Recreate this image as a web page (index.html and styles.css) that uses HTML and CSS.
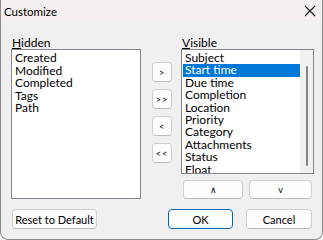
FILE: index.html
```html
<!DOCTYPE html>
<html>
  <head>
    <link rel="stylesheet" href="styles.css">
  </head>
  <body>
    <div class="window">
      <div class="titlebar">
        <span class="title">Customize</span>
        <svg class="close" width="12" height="12" viewBox="0 0 12 12">
          <path d="M1 1 L11 11 M11 1 L1 11" stroke="#1a1a1a" stroke-width="1.1" fill="none" />
        </svg>
      </div>
      <div class="content">
        <div class="columns">
          <div class="label"><u>H</u>idden</div>
          <div></div>
          <div class="label"><u>V</u>isible</div>

          <div class="listbox hidden-list">
            <div class="items">
              <div class="item">Created</div>
              <div class="item">Modified</div>
              <div class="item">Completed</div>
              <div class="item">Tags</div>
              <div class="item">Path</div>
            </div>
          </div>

          <div class="movers">
            <button class="btn small">&gt;</button>
            <button class="btn small">&gt;&gt;</button>
            <button class="btn small">&lt;</button>
            <button class="btn small">&lt;&lt;</button>
          </div>

          <div class="visible-col">
            <div class="listbox visible-list">
              <div class="items">
                <div class="item">Subject</div>
                <div class="item selected">Start time</div>
                <div class="item">Due time</div>
                <div class="item">Completion</div>
                <div class="item">Location</div>
                <div class="item">Priority</div>
                <div class="item">Category</div>
                <div class="item">Attachments</div>
                <div class="item">Status</div>
                <div class="item">Float</div>
              </div>
              <div class="scrollbar"><div class="thumb"></div></div>
            </div>
            <div class="order">
              <button class="btn up">&#x2227;</button>
              <button class="btn down">v</button>
            </div>
          </div>
        </div>

        <div class="footer">
          <button class="btn reset">Reset to Default</button>
          <div class="actions">
            <button class="btn ok">OK</button>
            <button class="btn cancel">Cancel</button>
          </div>
        </div>
      </div>
    </div>
  </body>
</html>
```

FILE: styles.css
```css
body {
  margin: 0;
  font-family: "Lato", "Noto Sans", sans-serif;
  font-size: 12px;
  color: #000;
}

.window {
  width: 323px;
  height: 240px;
  box-sizing: border-box;
  border: 1px solid #8a8a8a;
  border-top: none;
  border-radius: 0 0 8px 8px;
  background: #f0f0f0;
  overflow: hidden;
}

.titlebar {
  height: 22px;
  display: flex;
  align-items: center;
  justify-content: space-between;
  padding: 0 6px 0 3px;
  background: #f6efef;
}

.title {
  font-size: 11.5px;
}

.content {
  padding: 15px 10px 0 10px;
}

.columns {
  display: grid;
  grid-template-columns: 130px 20px 131px;
  column-gap: 11px;
  align-items: start;
}

.columns > .label:nth-child(3) {
  margin-left: -2px;
}

.label {
  height: 12px;
  line-height: 12px;
  padding-left: 1px;
}

.listbox {
  box-sizing: border-box;
  background: #fff;
  border: 1px solid #828790;
  padding: 1px;
  display: flex;
  overflow: hidden;
}

.hidden-list {
  height: 150px;
}

.visible-col {
  margin-left: -2px;
}

.visible-list {
  height: 125px;
}

.items {
  flex: 1;
  padding-top: 1px;
}

.item {
  height: 12.6px;
  line-height: 12.6px;
  padding-left: 2px;
  white-space: nowrap;
}

.visible-list .item {
  height: 12.4px;
  line-height: 12.4px;
}

.item.selected {
  background: #0078d7;
  color: #fff;
}

.scrollbar {
  width: 13px;
  background: #f0f0f0;
  margin: -1px -1px -1px 0;
  display: flex;
  justify-content: center;
  padding-top: 16px;
}

.thumb {
  width: 2px;
  height: 100px;
  border-radius: 1px;
  background: #858585;
}

.movers {
  display: flex;
  flex-direction: column;
  gap: 7px;
  padding-top: 13px;
}

.btn {
  box-sizing: border-box;
  font-family: inherit;
  font-size: 11px;
  color: #000;
  background: #fdfdfd;
  border: 1px solid #d0d0d0;
  border-bottom-color: #bcbcbc;
  border-radius: 4px;
  padding: 0;
  height: 20px;
  white-space: nowrap;
}

.btn.small {
  width: 20px;
  height: 20px;
  font-size: 9px;
  letter-spacing: 1px;
}

.order {
  display: flex;
  gap: 6px;
  margin-top: 6px;
  padding-left: 2px;
}

.order .btn {
  height: 19px;
  font-size: 9px;
}

.up {
  width: 60px;
}

.down {
  width: 63px;
}

.footer {
  display: flex;
  justify-content: space-between;
  align-items: center;
  margin-top: 10px;
}

.reset {
  width: 85px;
  margin-left: 1px;
}

.actions {
  display: flex;
  gap: 13px;
}

.ok {
  width: 65px;
  border: 1px solid #0067c0;
}

.cancel {
  width: 66px;
}
```
